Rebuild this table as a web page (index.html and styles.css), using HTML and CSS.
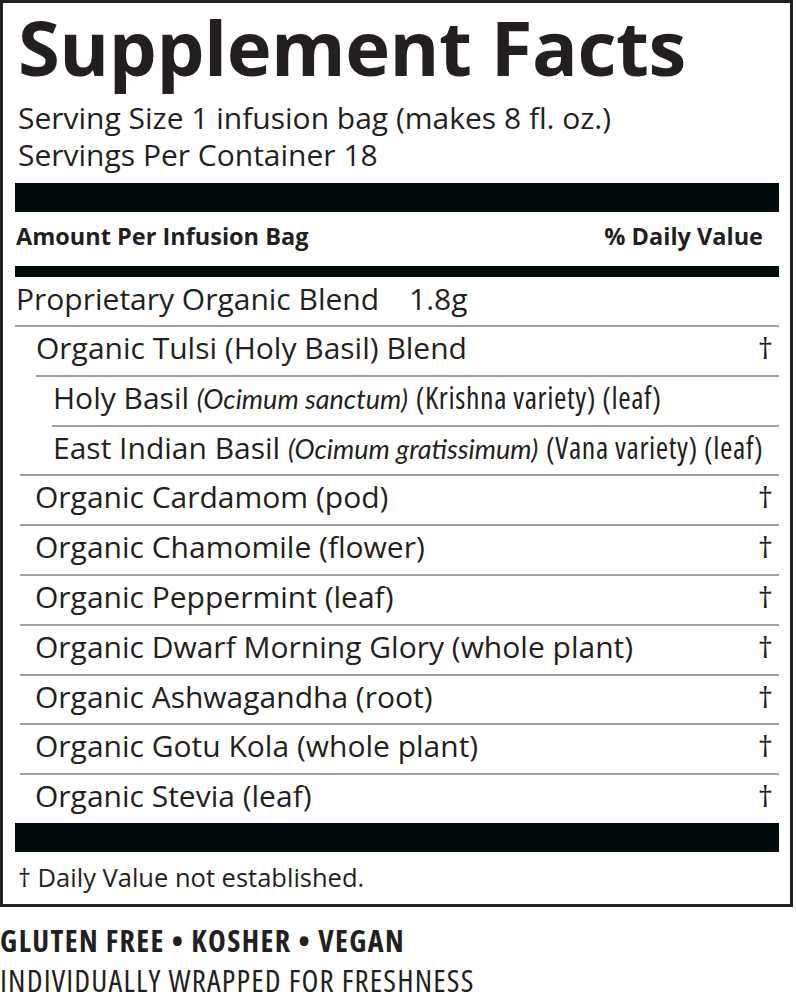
FILE: index.html
```html
<!DOCTYPE html>
<html lang="en">
<head>
<meta charset="utf-8">
<title>Supplement Facts</title>
<link rel="stylesheet" href="styles.css">
</head>
<body>
<div class="label">
  <h1 class="title">Supplement Facts</h1>
  <p class="serving serving-first">Serving Size 1 infusion bag (makes 8 fl. oz.)</p>
  <p class="serving">Servings Per Container 18</p>
  <div class="bar bar-thick bar-top"></div>
  <div class="head"><span>Amount Per Infusion Bag</span><span>% Daily Value</span></div>
  <div class="bar bar-mid"></div>
  <ul class="rows">
    <li class="row row-blend"><span class="name">Proprietary Organic Blend<span class="amt">1.8g</span></span></li>
    <li class="row row-sub"><span class="name">Organic Tulsi (Holy Basil) Blend</span><span class="dv">†</span></li>
    <li class="row row-subsub"><span class="name">Holy Basil <i>(Ocimum sanctum)</i> <span class="cond">(Krishna variety) (leaf)</span></span></li>
    <li class="row row-last-sub"><span class="name">East Indian Basil <i>(Ocimum gratissimum)</i> <span class="cond">(Vana variety) (leaf)</span></span></li>
    <li class="row row-item"><span class="name">Organic Cardamom (pod)</span><span class="dv">†</span></li>
    <li class="row row-item"><span class="name">Organic Chamomile (flower)</span><span class="dv">†</span></li>
    <li class="row row-item"><span class="name">Organic Peppermint (leaf)</span><span class="dv">†</span></li>
    <li class="row row-item"><span class="name">Organic Dwarf Morning Glory (whole plant)</span><span class="dv">†</span></li>
    <li class="row row-item"><span class="name">Organic Ashwagandha (root)</span><span class="dv">†</span></li>
    <li class="row row-item"><span class="name">Organic Gotu Kola (whole plant)</span><span class="dv">†</span></li>
    <li class="row row-item row-end"><span class="name">Organic Stevia (leaf)</span><span class="dv">†</span></li>
  </ul>
  <div class="bar bar-thick"></div>
  <p class="foot">† Daily Value not established.</p>
</div>
<p class="claims">GLUTEN FREE • KOSHER • VEGAN</p>
<p class="wrapped">INDIVIDUALLY WRAPPED FOR FRESHNESS</p>
</body>
</html>
```

FILE: styles.css
```css
html, body {
  margin: 0;
  padding: 0;
  background: #ffffff;
}

body {
  font-family: "Open Sans", "Noto Sans", sans-serif;
  color: #231f20;
}

.label {
  width: 793px;
  height: 907px;
  box-sizing: border-box;
  border: 3px solid #231f20;
  padding: 0 11px 0 12px;
}

.title {
  margin: 0;
  padding: 0 0 0 3px;
  font-size: 76px;
  line-height: 87px;
  font-weight: 700;
  letter-spacing: -0.5px;
}

.serving {
  margin: 0;
  padding-left: 3px;
  font-size: 30px;
  line-height: 37px;
}

.serving-first {
  margin-top: 9px;
}

.bar {
  background: #020c0c;
}

.bar-thick {
  height: 29px;
}

.bar-top {
  margin-top: 10px;
}

.head {
  display: flex;
  justify-content: space-between;
  font-weight: 700;
  font-size: 23.5px;
  line-height: 48px;
  padding: 0 16px 6px 1px;
}

.bar-mid {
  height: 11px;
}

.rows {
  list-style: none;
  margin: 0;
  padding: 0;
}

.row {
  display: flex;
  justify-content: space-between;
  align-items: flex-start;
  height: 47.8px;
  line-height: 42px;
  border-bottom: 2px solid #a0a0a0;
  font-size: 30px;
  padding-right: 6px;
}

.name {
  white-space: nowrap;
}

.row-blend {
  height: 48px;
  line-height: 43px;
  padding-left: 1px;
}

.row-sub {
  margin-left: 21px;
}

.row-subsub {
  margin-left: 37px;
  padding-left: 1px;
}

.row-last-sub {
  margin-left: 5px;
  padding-left: 33px;
}

.row-item {
  margin-left: 5px;
  padding-left: 15px;
}

.row-end {
  border-bottom: none;
}

.amt {
  margin-left: 30px;
}

.name i {
  font-family: "Lato", "Open Sans", sans-serif;
  font-style: italic;
  font-size: 27px;
}

.cond {
  font-stretch: 75%;
  letter-spacing: 0.6px;
}

.foot {
  margin: 0;
  padding: 5px 0 0 3px;
  font-size: 25.5px;
  line-height: 40px;
}

.claims {
  margin: 0;
  padding-top: 16px;
  font-size: 30px;
  line-height: 36px;
  font-weight: 700;
  font-stretch: 75%;
  letter-spacing: 1.4px;
}

.wrapped {
  margin: 1px 0 0;
  font-size: 31px;
  line-height: 40px;
  font-stretch: 75%;
  letter-spacing: 1.15px;
}
```
